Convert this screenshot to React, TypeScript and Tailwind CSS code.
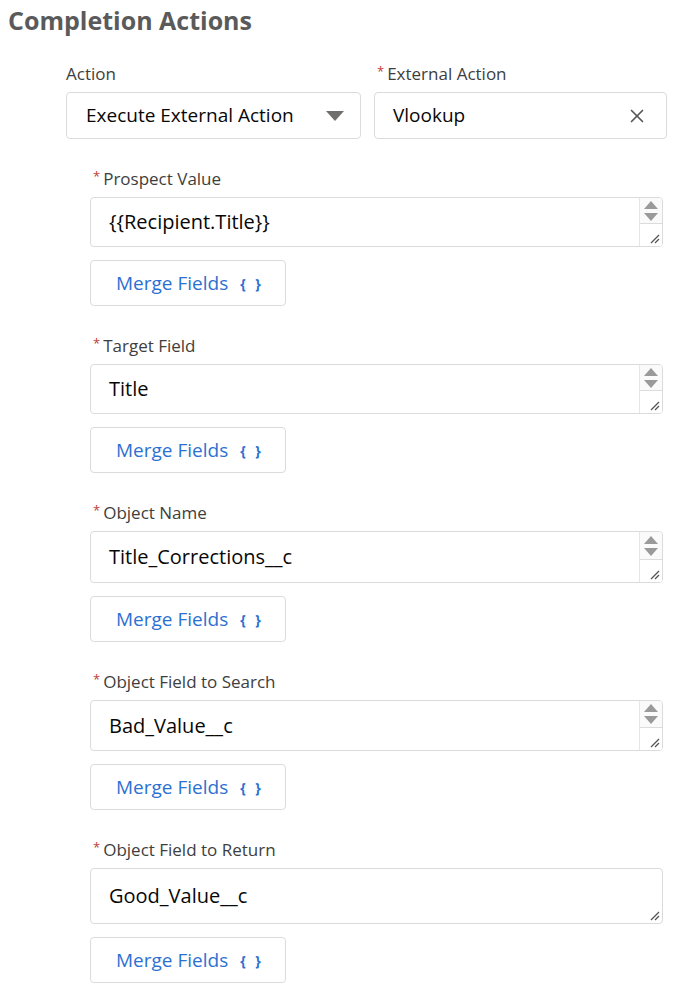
import { X } from 'lucide-react';

// ============================================
// COMPLETION ACTIONS
// External action config form
// ============================================

interface FieldProps {
  label: string;
  value: string;
  heightClass: string;
  scroll?: boolean;
}

function Grip() {
  return (
    <svg width="10" height="10" viewBox="0 0 10 10" className="text-[#555]">
      <line x1="1" y1="9" x2="9" y2="1" stroke="currentColor" strokeWidth="1.3" />
      <line x1="5" y1="9" x2="9" y2="5" stroke="currentColor" strokeWidth="1.3" />
    </svg>
  );
}

function Scrollbar() {
  return (
    <div className="w-[23px] flex flex-col border-l border-[#e6e6e6] bg-[#fafafa]">
      <div className="flex-1 flex flex-col items-center justify-center gap-[4px]">
        <div className="w-0 h-0 border-l-[7px] border-r-[7px] border-b-[8px] border-l-transparent border-r-transparent border-b-[#9a9a9a]" />
        <div className="w-0 h-0 border-l-[7px] border-r-[7px] border-t-[8px] border-l-transparent border-r-transparent border-t-[#9a9a9a]" />
      </div>
      <div className="h-[23px] border-t border-[#dcdcdc] bg-white flex items-end justify-end pr-[2px] pb-[2px]">
        <Grip />
      </div>
    </div>
  );
}

function MergeButton() {
  return (
    <button className="mt-[13px] w-[196px] h-[46px] border border-[#dddbda] rounded-[4px] bg-white flex items-center pl-[25px] text-[19px] text-[#2c71d1]">
      Merge Fields
      <span className="ml-[12px] text-[14px] font-bold tracking-[3px]">{'{ }'}</span>
    </button>
  );
}

function Required() {
  return <span className="text-[#c23934] text-[13px] mr-[3px] -mt-[4px]">*</span>;
}

function Field({ label, value, heightClass, scroll = true }: FieldProps) {
  return (
    <div className="mb-[30px]">
      <label className="flex items-center h-[20px] mb-[8px] pl-[3px] text-[17px] text-[#3e3e3c]">
        <Required />
        {label}
      </label>
      <div className={`${heightClass} flex border border-[#dddbda] rounded-[4px] bg-white overflow-hidden`}>
        <div className="flex-1 flex items-center pl-[18px] text-[20px] text-[#080707]">
          {value}
        </div>
        {scroll ? (
          <Scrollbar />
        ) : (
          <div className="flex items-end pr-[2px] pb-[2px]">
            <Grip />
          </div>
        )}
      </div>
      <MergeButton />
    </div>
  );
}

export default function App() {
  return (
    <div className="w-[688px] h-[994px] bg-white font-['Open_Sans',sans-serif] overflow-hidden">
      {/* Header */}
      <h1 className="pl-[8px] pt-[4px] h-[36px] text-[25px] leading-[32px] font-bold text-[#5a5a5a]">
        Completion Actions
      </h1>

      {/* Action row */}
      <div className="ml-[66px] mr-[21px] mt-[28px] grid grid-cols-[295px_293px] gap-[13px]">
        <div>
          <label className="flex items-center h-[20px] mb-[8px] text-[17px] text-[#3e3e3c]">Action</label>
          <div className="h-[47px] border border-[#dddbda] rounded-[4px] flex items-center justify-between pl-[19px] pr-[16px] text-[19px] text-[#080707]">
            Execute External Action
            <div className="w-0 h-0 border-l-[9px] border-r-[9px] border-t-[10px] border-l-transparent border-r-transparent border-t-[#706e6b]" />
          </div>
        </div>
        <div>
          <label className="flex items-center h-[20px] mb-[8px] pl-[3px] text-[17px] text-[#3e3e3c]">
            <Required />
            External Action
          </label>
          <div className="h-[47px] border border-[#dddbda] rounded-[4px] flex items-center justify-between pl-[18px] pr-[18px] text-[19px] text-[#080707]">
            Vlookup
            <X className="w-[22px] h-[22px] text-[#555]" strokeWidth={1.8} />
          </div>
        </div>
      </div>

      {/* Fields */}
      <div className="ml-[90px] mr-[25px] mt-[30px]">
        <Field label="Prospect Value" value="{{Recipient.Title}}" heightClass="h-[50px]" />
        <Field label="Target Field" value="Title" heightClass="h-[50px]" />
        <Field label="Object Name" value="Title_Corrections__c" heightClass="h-[52px]" />
        <Field label="Object Field to Search" value="Bad_Value__c" heightClass="h-[51px]" />
        <Field label="Object Field to Return" value="Good_Value__c" heightClass="h-[56px]" scroll={false} />
      </div>
    </div>
  );
}
